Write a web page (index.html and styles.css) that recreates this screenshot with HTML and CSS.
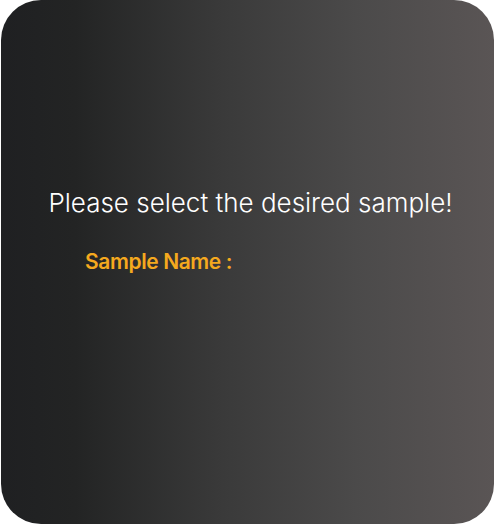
FILE: index.html
```html
<!DOCTYPE html>
<html>
<head>
<meta charset="utf-8">
<link rel="stylesheet" href="styles.css">
</head>
<body>
<div class="card">
  <h1 class="title">Please select the desired sample!</h1>
  <div class="field">
    <span class="label">Sample Name :</span>
  </div>
</div>
</body>
</html>
```
FILE: styles.css
```css
html, body {
  margin: 0;
  padding: 0;
  background: #ffffff;
}
.card {
  box-sizing: border-box;
  width: 493px;
  height: 524px;
  margin-left: 1px;
  border-radius: 40px;
  background: linear-gradient(90deg, #1f2022 0%, #232424 15%, #3a3a3a 45%, #4b4a4a 72%, #5a5555 100%);
  padding-top: 186px;
  display: flex;
  flex-direction: column;
}
.title {
  margin: 0;
  font-family: "Inter", "Open Sans", sans-serif;
  font-weight: 300;
  font-size: 26px;
  line-height: 34px;
  color: #ffffff;
  text-align: center;
  padding-left: 6px;
  letter-spacing: 0;
}
.field {
  padding-left: 84px;
  margin-top: 28px;
}
.label {
  font-family: "Inter", "Open Sans", sans-serif;
  font-weight: 600;
  font-size: 21px;
  letter-spacing: -0.4px;
  color: #f5a91e;
  line-height: 28px;
}
```
